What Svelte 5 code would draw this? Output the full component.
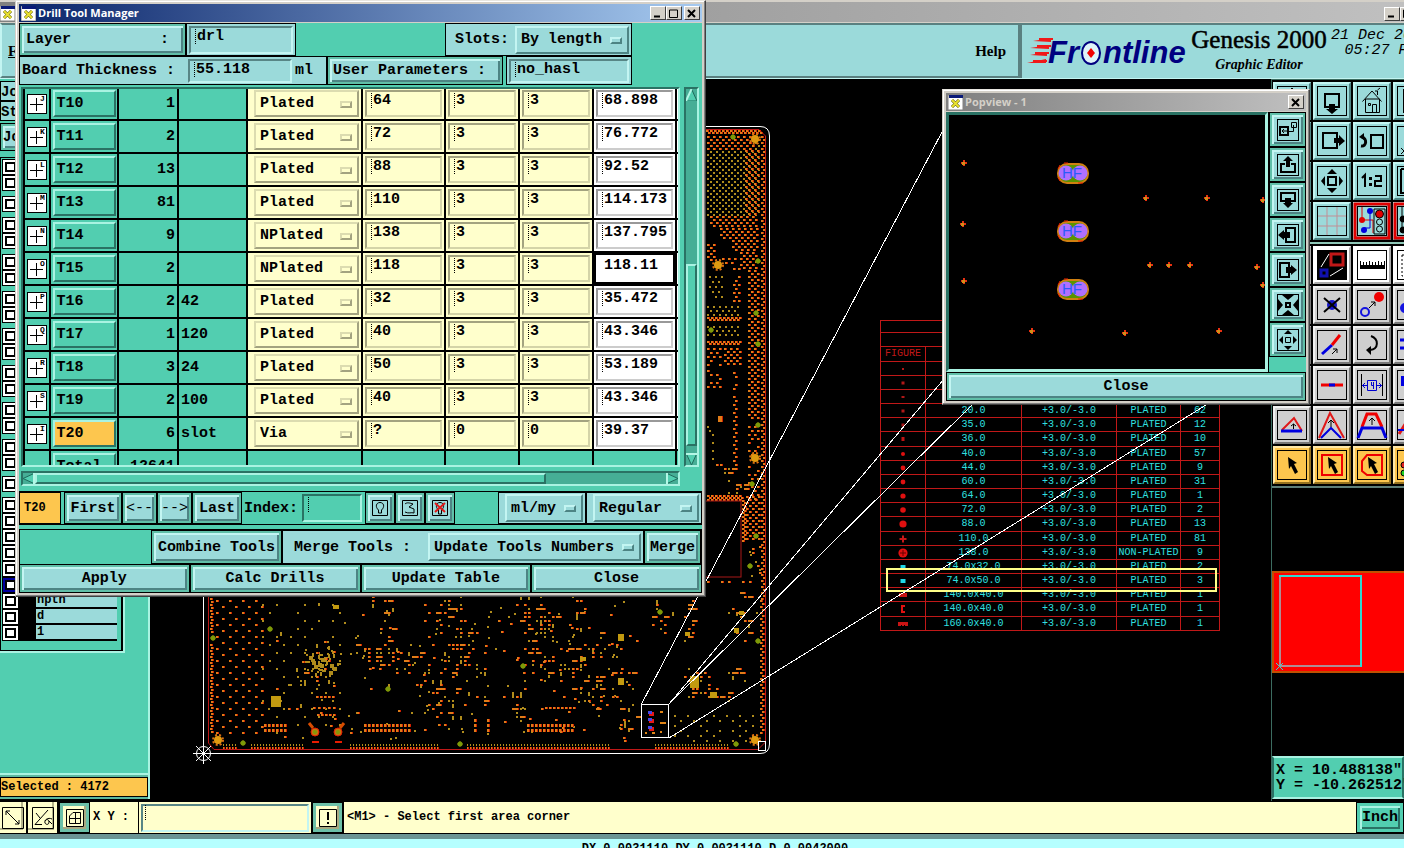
<script lang="ts">
	type Tool = { id: string; figure: string; count: string; slot: string; type: string; size: string; drill: string };

	const rows: [string, string, string, string, string, string, string][] = [
		['T10', 'J', '1', '', 'Plated', '64', '68.898'],
		['T11', 'K', '2', '', 'Plated', '72', '76.772'],
		['T12', 'L', '13', '', 'Plated', '88', '92.52'],
		['T13', 'M', '81', '', 'Plated', '110', '114.173'],
		['T14', 'N', '9', '', 'NPlated', '138', '137.795'],
		['T15', 'O', '2', '', 'NPlated', '118', '118.11'],
		['T16', 'P', '2', '42', 'Plated', '32', '35.472'],
		['T17', 'Q', '1', '120', 'Plated', '40', '43.346'],
		['T18', 'R', '3', '24', 'Plated', '50', '53.189'],
		['T19', 'S', '2', '100', 'Plated', '40', '43.346'],
		['T20', 'I', '6', 'slot', 'Via', '?', '39.37']
	];
	const tools: Tool[] = rows.map(([id, figure, count, slot, type, size, drill]) => ({ id, figure, count, slot, type, size, drill }));
	const selected = 'T20';

	const legend = [
		['', '', '', ''],
		['', '', '', ''],
		['', '', '', ''],
		['20.0', '+3.0/-3.0', 'PLATED', '62'],
		['35.0', '+3.0/-3.0', 'PLATED', '12'],
		['36.0', '+3.0/-3.0', 'PLATED', '10'],
		['40.0', '+3.0/-3.0', 'PLATED', '57'],
		['44.0', '+3.0/-3.0', 'PLATED', '9'],
		['60.0', '+3.0/-3.0', 'PLATED', '31'],
		['64.0', '+3.0/-3.0', 'PLATED', '1'],
		['72.0', '+3.0/-3.0', 'PLATED', '2'],
		['88.0', '+3.0/-3.0', 'PLATED', '13'],
		['110.0', '+3.0/-3.0', 'PLATED', '81'],
		['138.0', '+3.0/-3.0', 'NON-PLATED', '9'],
		['74.0x32.0', '+3.0/-3.0', 'PLATED', '2'],
		['74.0x50.0', '+3.0/-3.0', 'PLATED', '3'],
		['140.0x40.0', '+3.0/-3.0', 'PLATED', '1'],
		['140.0x40.0', '+3.0/-3.0', 'PLATED', '1'],
		['160.0x40.0', '+3.0/-3.0', 'PLATED', '1']
	];
	const dot = (r: number) => `<circle cx="7" cy="5" r="${r}" fill="#e01010"/>`;
	const box = (w: number, h: number, c: string) => `<rect x="${7 - w / 2}" y="${5 - h / 2}" width="${w}" height="${h}" fill="${c}"/>`;
	const figures = [
		box(2, 2, '#b01818'), box(3, 3, '#b01818'), box(3, 2, '#b01818'), box(3, 3, '#b01818'), box(3, 3, '#b01818'),
		box(3, 4, '#c01414'), dot(2), dot(2.4), dot(2.4), dot(2.6), dot(2.8), dot(3.6),
		'<path d="M7 1.500V8.500M3.500 5H10.500" stroke="#c81818" stroke-width="2"/>',
		'<circle cx="7" cy="5" r="4.600" fill="#e01010"/><path d="M7 2V8M4 5H10" stroke="#600"/>',
		box(5, 4, '#20d8e8'), box(5, 4, '#20d8e8'), box(8, 4, '#c81414'),
		'<path d="M5 1H9V3H7V7H9V9H5Z" fill="#e01010"/>',
		'<path d="M2 3H12V7H9V6H8V7H6V6H5V7H2Z" fill="#c81414"/>'
	];

	// number of layers in each block of the layer list
	const layerGroups = [2, 1, 2, 2, 2, 2, 2, 2, 2, 1, 9];
	const layerNames: Record<string, string> = { '10-6': 'npth', '10-7': 'd', '10-8': '1' };

	// toolbar icons, drawn on a 30x30 grid inside a thin frame
	const arrow = '<path d="M11 7L20 13L17 14L21 22L18 24L14 16L12 19Z" fill="#000" stroke="none"/>';
	const icons: Record<string, string> = {
		up: '<path d="M8 10H22V23H8Z" stroke-width="2"/><path d="M15 2L20 8H10Z" fill="#000"/>',
		down: '<path d="M8 8H22V21H8Z" stroke-width="2"/><path d="M12 18H18V23H21L15 28L9 23H12Z" fill="#000" stroke="none"/>',
		home: '<path d="M5.500 15.500L15 5L24.500 15.500M8.500 13V26.500H22.500V13H8.500M15.500 26V18.500H19.500V26M11.500 17.500H13.500V19.500H11.500ZM20.500 9V5H18M20.500 4L23 2"/>',
		split: '<path d="M7 3V27M7 14H28M7 20H28" stroke-width="2"/>',
		right: '<path d="M6 7H20V22H6Z" stroke-width="2"/><path d="M17 12H22V9L28 15L22 20V17H17Z" fill="#000" stroke="none"/>',
		back: '<path d="M14 9H26V22H14Z" stroke-width="2"/><path d="M4 20C10 21 10 12 5 11" stroke-width="3"/><path d="M2 11L7 7V14Z" fill="#000" stroke="none"/>',
		cross: '<path d="M4 22L10 28M10 22L4 28"/>',
		pan: '<path d="M11 11H19V19H11Z" stroke-width="2"/><path d="M15 3L20 8H10ZM15 27L20 22H10ZM4 15L8 10V20ZM26 15L22 10V20Z" fill="#000" stroke="none"/>',
		zoom: '<path d="M5 12L8 9V21" stroke-width="2"/><path d="M12 11H15V14H12ZM12 17H15V20H12Z" fill="#000" stroke="none"/><path d="M18 10H24V15H18V20H25" stroke-width="2"/>',
		frame: '<path d="M4 3H28M4 3V27H28M9 7H28M9 7V22H28" stroke-width="2"/>',
		grid: '<path d="M10 1V29M20 1V29M1 10H29M1 20H29" stroke="#c08f95"/>',
		net: '<rect x="-2" y="-2" width="34" height="34" stroke="#e00000" stroke-width="3"/><path d="M5 1V14H16V27" stroke="#e00000"/><path d="M13 4V22H7" stroke="#0000e0"/><circle cx="5" cy="14" r="3" fill="#e00000" stroke="none"/><circle cx="13" cy="5" r="3" fill="#0000e0" stroke="none"/><circle cx="7" cy="24" r="3" fill="#0000e0" stroke="none"/><path d="M17 3H28V28H17Z"/><circle cx="22.500" cy="8" r="4" fill="#e00000"/><circle cx="22.500" cy="16" r="3"/><circle cx="22.500" cy="23" r="3"/>',
		net2: '<rect x="-2" y="-2" width="34" height="34" stroke="#e00000" stroke-width="3"/><path d="M5 1V14M5 14V27"/><circle cx="6" cy="13" r="3" fill="#000"/><circle cx="6" cy="24" r="3" fill="#000"/>',
		area: '<rect x="1" y="1" width="28" height="28" fill="#000"/><path d="M14 4H26V15H14Z" stroke="#c01818" stroke-width="3"/><path d="M4 20H10V26H4Z" stroke="#1010b0" stroke-width="3"/><path d="M4 17L12 4M13 26L26 18" stroke="#fff"/>',
		ruler: '<path d="M3 15H28V19H3Z" fill="#000" stroke="none"/><path d="M3.500 15V11M6.500 15V12M9.500 15V12M12.500 15V11M15.500 15V12M18.500 15V12M21.500 15V11M24.500 15V12M27.500 15V11"/>',
		dashed: '<path d="M5 5H28M5 5V26H28" stroke-dasharray="2 2"/>',
		remove: '<circle cx="15" cy="15" r="5" fill="#1414c8" stroke="none"/><path d="M7 8L23 22M23 8L7 22" stroke-width="2"/>',
		move: '<circle cx="8" cy="22" r="4" stroke="#1414e0" stroke-width="2"/><circle cx="22" cy="7" r="5" fill="#f00000" stroke="none"/><path d="M12 18L18 12M14 12H18V16"/>',
		dot: '<circle cx="8" cy="18" r="5" fill="#1414e0" stroke="none"/>',
		line: '<path d="M5 24L15 15" stroke="#0000e0" stroke-width="3"/><path d="M15 15L23 5" stroke="#f00000" stroke-width="3"/><path d="M15 24L20 19M16 19H20V23"/>',
		turn: '<path d="M14 6C22 9 22 19 13 20" stroke-width="2"/><path d="M9 20L14 16V25Z" fill="#000" stroke="none"/>',
		dash: '<path d="M3 10H10M3 18H8" stroke="#0000e0" stroke-width="3"/>',
		trim: '<path d="M4 15H26" stroke="#f00000" stroke-width="3"/><path d="M12 15H18" stroke="#0000e0" stroke-width="3"/>',
		gap: '<path d="M4.500 4V26M25.500 4V26"/><path d="M10.500 10.500H19.500V20.500H10.500ZM5 15.500H10M20 15.500H25M8 13L5.500 15.500L8 18M22 13L24.500 15.500L22 18M14.500 12V15.500H17M16.500 12V19" stroke="#0000d0"/>',
		blue: '<path d="M4 6H14V16H4Z" fill="#0000e0" stroke="none"/>',
		tri: '<path d="M5 20L17 8L25 21" stroke="#e01818" stroke-width="2"/><path d="M4 21H25" stroke="#0000e0" stroke-width="3"/><path d="M16.500 19V14M14 16L16.500 14L19 16"/>',
		peak: '<path d="M2 28L13 3L27 28" stroke="#e01818" stroke-width="2"/><path d="M4 28L14 18L24 28" stroke="#0000e0" stroke-width="2"/><path d="M14 17V10M11 13L14 10L17 13"/>',
		trap: '<path d="M5 17L10 4H19L25 17" stroke="#f00000" stroke-width="3"/><path d="M1 28L5 18H25L29 28" stroke="#0000e0" stroke-width="3"/><path d="M15 15V9M12 11L15 8L18 11"/>',
		slope: '<path d="M2 24L12 8" stroke="#e01818" stroke-width="3"/><path d="M1 20H12" stroke="#0000e0" stroke-width="2"/>',
		pick: arrow,
		pickBox: '<path d="M5 5H25V25H5Z" stroke="#f00000" stroke-width="2"/>' + arrow,
		pickPoly: '<path d="M10 5H25V25H10L5 21V11Z" stroke="#f00000" stroke-width="2"/>' + arrow,
		pickNet: '<circle cx="7" cy="15" r="3" fill="#e02020"/><circle cx="7" cy="23" r="3" fill="#20d020"/>'
	};
	const toolbar: { tone: string; names: string[] }[] = [
		{ tone: 'cyan', names: ['up', 'down', 'home', 'split'] },
		{ tone: 'cyan', names: ['back', 'right', 'back', 'cross'] },
		{ tone: 'cyan', names: ['pan', 'pan', 'zoom', 'frame'] },
		{ tone: 'cyan', names: ['grid', 'grid', 'net', 'net2'] },
		{ tone: 'white', names: ['dashed', 'area', 'ruler', 'dashed'] },
		{ tone: 'grey', names: ['dot', 'remove', 'move', 'dot'] },
		{ tone: 'grey', names: ['line', 'line', 'turn', 'dash'] },
		{ tone: 'grey', names: ['trim', 'trim', 'gap', 'blue'] },
		{ tone: 'grey', names: ['tri', 'peak', 'trap', 'slope'] },
		{ tone: 'amber', names: ['pick', 'pickBox', 'pickPoly', 'pickNet'] }
	];

	// same idea on a 22x22 grid
	const popIcons: [string, string][] = [
		['Popup', '<path d="M3 8H11V16H3Z" stroke-width="2"/><path d="M14.500 3.500H19.500V8.500H14.500ZM11 12.500H16.500V6M7 10L5 12L7 14M5 12H10"/>'],
		['Pan up', '<path d="M8 10H4V18H18V10H14" stroke-width="2"/><path d="M9 13V7H6L11 2L16 7H13V13Z" fill="#000" stroke="none"/>'],
		['Pan down', '<path d="M8 12H4V4H18V12H14" stroke-width="2"/><path d="M8 9H14V14H16L11 19L6 14H8Z" fill="#000" stroke="none"/>'],
		['Pan left', '<path d="M9 8V4H18V18H9V14" stroke-width="2"/><path d="M13 8H7V6L1 11L7 16V14H13Z" fill="#000" stroke="none"/>'],
		['Pan right', '<path d="M12 8V4H3V18H12V14" stroke-width="2"/><path d="M9 8H14V6L20 11L14 16V14H9Z" fill="#000" stroke="none"/>'],
		['Zoom in', '<path d="M9 9H13V13H9Z" stroke-width="2"/><path d="M5 1H17L11 6ZM5 21H17L11 16ZM1 5V17L6 11ZM21 5V17L16 11Z" fill="#000" stroke="none"/>'],
		['Zoom out', '<path d="M8.500 8.500H13.500V13.500H8.500Z"/><path d="M11 1L15 5H7ZM11 21L15 17H7ZM2 11L6 7V15ZM20 11L16 7V15Z" fill="#000" stroke="none"/>']
	];
	const vias = [[964, 163], [963, 224], [964, 281], [1146, 198], [1207, 198], [1263, 200], [1150, 265], [1169, 265], [1190, 265], [1257, 267], [1263, 285], [1032, 331], [1125, 333], [1219, 331]];

	// board holes: orange ones carry a red edge, the rest are plain gold
	let seed = 71;
	const rnd = () => (seed = (seed * 16807) % 2147483647) / 2147483647;
	let gold = '';
	let red = '';
	let plain = '';
	function hole(x: number, y: number, w = 2, h = 2) {
		red += `M${x + 1} ${y}h${w}v${h}h-${w}z`;
		gold += `M${x} ${y}h${w}v${h}h-${w}z`;
	}
	function dim(x: number, y: number, w = 2, h = 2) {
		plain += `M${x} ${y}h${w}v${h}h-${w}z`;
	}
	function stagger(x0: number, y0: number, x1: number, y1: number, dx: number, dy: number, keep = 1, put: (x: number, y: number) => void = hole) {
		for (let y = y0, r = 0; y < y1; y += dy, r++) {
			for (let x = x0 + (r % 2 ? Math.floor(dx / 2) : 0); x < x1; x += dx) {
				if (rnd() < keep) put(x, y);
			}
		}
	}
	function scatter(x0: number, y0: number, x1: number, y1: number, n: number) {
		for (let i = 0; i < n; i++) {
			const x = Math.round(x0 + rnd() * (x1 - x0));
			const y = Math.round(y0 + rnd() * (y1 - y0));
			if (rnd() < 0.5) hole(x, y);
			else dim(x, y);
		}
	}
	function cluster(cx: number, cy: number, rx: number, ry: number, n: number) {
		for (let i = 0; i < n; i++) {
			const x = Math.round((cx + (rnd() + rnd() - 1) * rx) / 4) * 4;
			const y = Math.round((cy + (rnd() + rnd() - 1) * ry) / 4) * 4;
			const k = rnd();
			if (k < 0.12) hole(x, y, 5, 2);
			else if (k < 0.22) dim(x, y, 2, 4);
			else if (k < 0.55) dim(x, y);
			else hole(x, y);
		}
	}
	// upper right area
	stagger(706, 130, 762, 133, 4, 2);
	stagger(707, 136, 736, 216, 6, 3, 1, dim);
	stagger(737, 136, 760, 216, 6, 3, 1, dim);
	stagger(707, 136, 755, 150, 6, 3);
	stagger(745, 150, 760, 216, 6, 3);
	stagger(710, 216, 758, 228, 6, 3);
	stagger(720, 228, 758, 240, 6, 3);
	stagger(732, 240, 758, 252, 6, 3);
	stagger(740, 252, 758, 268, 6, 3);
	stagger(707, 244, 714, 262, 6, 3);
	stagger(722, 258, 736, 266, 6, 4);
	stagger(733, 268, 740, 304, 5, 4, 0.8);
	stagger(709, 276, 724, 298, 6, 5, 0.8, dim);
	stagger(707, 306, 740, 316, 6, 4, 1, dim);
	stagger(707, 317, 740, 320, 4, 2);
	stagger(707, 326, 740, 338, 6, 4, 1, dim);
	stagger(707, 341, 740, 344, 4, 2);
	stagger(707, 348, 722, 368, 6, 4, 0.8);
	stagger(724, 348, 740, 366, 6, 3);
	stagger(707, 370, 722, 390, 6, 4, 0.7);
	stagger(733, 372, 737, 470, 4, 4, 0.8);
	stagger(748, 270, 760, 420, 6, 3);
	stagger(748, 426, 760, 500, 6, 4, 0.7);
	stagger(746, 496, 760, 540, 6, 3);
	stagger(707, 495, 742, 500, 4, 2);
	stagger(742, 500, 746, 542, 4, 2);
	stagger(761, 136, 765, 600, 4, 3);
	stagger(707, 426, 714, 470, 5, 4, 0.5, dim);
	cluster(726, 470, 16, 12, 12);
	cluster(738, 488, 10, 8, 8);
	scatter(748, 545, 760, 578, 10);
	stagger(707, 581, 756, 583, 7, 2, 0.8);
	hole(718, 416, 4, 6);

	// edges
	stagger(210, 598, 213, 632, 3, 3);
	stagger(210, 644, 213, 734, 3, 3);
	stagger(760, 600, 764, 735, 4, 3);
	for (const [a, b] of [[223, 237], [251, 304], [350, 438], [467, 610], [655, 730]]) {
		for (let x = a; x < b; x += 3) {
			dim(x, 744, 1, 2);
			hole(x, 747, 1, 2);
		}
	}
	// lower left field
	stagger(216, 600, 262, 738, 13, 6);
	stagger(262, 604, 345, 740, 14, 8, 0.65, dim);
	cluster(285, 680, 30, 60, 14);
	// components
	for (let i = 0; i < 46; i++) dim(Math.round(320 + (rnd() + rnd() - 1) * 20), Math.round(660 + (rnd() + rnd() - 1) * 20), i % 3 ? 2 : 4, i % 2 ? 2 : 4);
	cluster(316, 675, 20, 24, 14);
	cluster(370, 650, 28, 18, 20);
	cluster(398, 663, 38, 22, 28);
	cluster(385, 618, 20, 30, 18);
	cluster(446, 615, 26, 32, 34);
	cluster(460, 652, 30, 26, 38);
	cluster(452, 690, 46, 26, 34);
	cluster(536, 626, 24, 34, 46);
	cluster(552, 662, 40, 24, 42);
	cluster(520, 705, 12, 26, 20);
	cluster(590, 686, 20, 26, 34);
	cluster(596, 646, 34, 18, 24);
	cluster(622, 672, 14, 40, 14);
	cluster(576, 610, 8, 26, 14);
	cluster(660, 620, 12, 24, 14);
	cluster(688, 618, 10, 26, 16);
	cluster(740, 618, 16, 28, 18);
	cluster(735, 672, 8, 8, 12);
	cluster(696, 684, 14, 18, 30);
	cluster(716, 696, 16, 8, 12);
	cluster(628, 725, 12, 24, 14);
	cluster(440, 712, 36, 22, 16);
	scatter(300, 600, 636, 740, 150);
	stagger(674, 715, 755, 742, 13, 5, 0.8, dim);
	// connectors
	for (const [x0, n] of [[264, 6], [364, 12], [527, 12]]) {
		for (let i = 0; i < n; i++) {
			hole(x0 + i * 4, 724, 2, 3);
			hole(x0 + i * 4, 729, 2, 3);
		}
	}
	for (let i = 0; i < 5; i++) {
		hole(316 + i * 4, 696);
		hole(313 + i * 5, 707);
		hole(317 + i * 4, 714);
	}
	for (let i = 0; i < 8; i++) hole(545 + i * 4, 707);
	for (let i = 0; i < 3; i++) {
		hole(474, 719 + i * 5, 2, 3);
		hole(487, 719 + i * 5, 2, 3);
	}
	const blocks = [[271, 696, 10, 11], [690, 676, 9, 12], [710, 692, 7, 6], [618, 634, 6, 7], [618, 678, 6, 7], [580, 657, 6, 4], [685, 632, 5, 4], [734, 628, 5, 5], [739, 611, 5, 4], [333, 605, 6, 4]];
	const stars = [[218, 740], [755, 740], [755, 139], [718, 265], [755, 458]];
	const greens = [[213, 638], [270, 629], [243, 743], [388, 689], [523, 666], [460, 744], [660, 612], [758, 641], [736, 744], [733, 137], [758, 261], [756, 313], [711, 330], [758, 344], [758, 425], [752, 484], [756, 536], [750, 566]];
</script>

{#snippet winIcon()}
	<svg class="win-icon" width="15" height="15" viewBox="0 0 15 15" aria-hidden="true">
		<rect width="15" height="15" fill="#fff" stroke="#808080" />
		<rect x="1" y="0" width="14" height="3" fill="#0a1a78" />
		<path d="M4 5L11 12M11 5L4 12" stroke="#555500" stroke-width="3" />
		<path d="M4 5L11 12M11 5L4 12" stroke="#e8e030" stroke-width="2" />
	</svg>
{/snippet}

{#snippet option(value: string, label: string)}
	<span class="option">
		<select aria-label={label}><option>{value}</option></select>
		<i></i>
	</span>
{/snippet}

{#snippet field(value: string, label: string, caret = true)}
	<span class="field" class:caret>
		<input type="text" {value} aria-label={label} />
	</span>
{/snippet}

<div class="app">
	<header class="titlebar idle">
		{@render winIcon()}
		<span class="grow"></span>
		<button class="win-btn" aria-label="Minimize"><svg width="10" height="9"><path d="M1 7.500H7" stroke="#000" stroke-width="2" /></svg></button>
		<button class="win-btn" aria-label="Maximize"><svg width="10" height="9"><path d="M.5 1H8.500V8.500H.5Z" fill="none" stroke="#000" /></svg></button>
	</header>

	<div class="menubar">
		<nav class="menus">
			<a href="#file" class="file"><u>F</u></a>
			<a href="#help">Help</a>
		</nav>
		<div class="brand">
			<svg class="logo" width="164" height="40" viewBox="0 0 164 40" role="img" aria-label="Frontline">
				<path d="M6 14L24 11V15ZM3 21L22 18V22ZM3 28L20 25V29ZM0 36L19 32V36Z" fill="#f01818" />
				<path d="M12 12H26M10 19H24M8 26H22M6 34H20" stroke="#f01818" stroke-width="2" />
				<g class="wordmark">
					<text x="21" y="36">Fr</text>
					<text x="76" y="36">ntline</text>
				</g>
				<ellipse cx="64" cy="26" rx="9" ry="11" fill="#dff4f8" stroke="#000080" stroke-width="2" />
				<path d="M64 21L68 26L64 31L60 26Z" fill="#f00000" />
			</svg>
			<div class="product">
				<strong>Genesis 2000</strong>
				<em>Graphic Editor</em>
			</div>
			<div class="clock"><span>21 Dec 2007</span><span>05:27 PM</span></div>
		</div>
	</div>

	<main class="workspace">
		<aside class="layers">
			<div class="info">Jo</div>
			<div class="info">St</div>
			<button class="btn job">Jo</button>
			<div class="layer-list">
				{#each layerGroups as count, g}
					<ul>
						{#each Array(count) as _, i}
							<li>
								<input type="checkbox" aria-label="Layer {g + 1}.{i + 1}" class:current={g === 10 && i === 5} />
								<span>{layerNames[`${g}-${i}`] ?? ''}</span>
							</li>
						{/each}
					</ul>
				{/each}
			</div>
			<div class="selected"><span>Selected : 4172</span></div>
		</aside>

		<section class="canvas">
			<svg class="board" width="1122" height="720" viewBox="150 80 1122 720" fill="none" aria-hidden="true">
				<path d="M203.500 126V753.500H760Q769.500 753.500 769.500 744V136Q769.500 126.500 760 126.500H203.500" stroke="#fff" stroke-width="1" />
				<path d="M208.500 130V743L214 749.500H758L765.500 742V136L759 129.500H208" stroke="#c01818" />
				<path d={plain} fill="#b08c1c" shape-rendering="crispEdges" />
				<path d={red} fill="#d02000" shape-rendering="crispEdges" />
				<path d={gold} fill="#e07c18" shape-rendering="crispEdges" />
				<rect x="690" y="501" width="51" height="76" fill="#000" stroke="#a81818" />
				{#each blocks as [x, y, w, h]}
					<rect {x} {y} width={w} height={h} fill="#c29a10" />
				{/each}
				{#each stars as [x, y]}
					<circle cx={x} cy={y} r="5" stroke="#e07010" stroke-width="2" stroke-dasharray="2 2" />
					<circle cx={x} cy={y} r="4" fill="#e09a10" />
				{/each}
				{#each greens as [x, y]}
					<path d="M{x - 3} {y}h6M{x} {y - 3}v6" stroke="#907800" />
					<circle cx={x} cy={y} r="2.500" fill="#7c9a08" />
				{/each}
				{#each [315, 338] as x}
					<circle cx={x} cy="732" r="4" fill="#c07810" stroke="#e81c00" stroke-width="1" />
					<circle cx={x} cy="732" r="2" fill="#809a08" />
					<path d="M{x - 3} 742h7" stroke="#e81c00" stroke-width="2" />
				{/each}
				<path d="M309 723l4 5M344 723l-4 5" stroke="#d84c00" stroke-width="3" />
				<g shape-rendering="crispEdges">
					<rect x="641.500" y="704.500" width="27" height="33" fill="#000" stroke="#fff" />
					{#each [712, 719, 727] as y}
						<rect x="649" {y} width="5" height="4" fill="#e81818" />
						<rect x="648" y={y - 1} width="4" height="3" fill="#4848e8" />
					{/each}
					<path d="M660 712h3M660 723h6M660 732h2M645 733h2M652 733h3" stroke="#e08416" stroke-width="2" />
					<path d="M758.500 741.500h7v9h-7z" stroke="#fff" />
				</g>
				<g stroke="#fff">
					<circle cx="203.500" cy="753.500" r="7" />
					<path d="M193 753.500H214M203.500 743V764M196 746L211 761M211 746L196 761" />
				</g>
			</svg>

			<table class="legend">
				<colgroup><col class="c0" /><col class="c1" /><col class="c2" /><col class="c3" /><col class="c4" /></colgroup>
				<thead>
					<tr class="cap"><td colspan="5"></td></tr>
					<tr class="cap2"><td colspan="5"></td></tr>
					<tr><th>FIGURE</th><th></th><th></th><th></th><th></th></tr>
				</thead>
				<tbody>
					{#each legend as cells, i}
						<tr>
							<td><svg width="14" height="10" viewBox="0 0 14 10">{@html figures[i]}</svg></td>
							{#each cells as cell}<td>{cell}</td>{/each}
						</tr>
					{/each}
				</tbody>
			</table>
			<div class="highlight"></div>
			<svg class="board" width="1122" height="720" viewBox="150 80 1122 720" fill="none" aria-hidden="true">
				<path d="M641.500 704L942 132M669 704L944 379M669 704L972 405M669 738L1206 405" stroke="#fff" shape-rendering="crispEdges" />
			</svg>
		</section>

		<aside class="side">
			<div class="toolbar">
				{#each toolbar as { tone, names }, r}
					<div class="tool-row" class:break={r === 4}>
						{#each names as name}
							<button class="tool {tone}" aria-label={name}>
								<svg width="30" height="30" viewBox="0 0 30 30" fill="none" stroke="#000">
									<rect x=".5" y=".5" width="29" height="29" />
									{@html icons[name]}
								</svg>
							</button>
						{/each}
					</div>
				{/each}
			</div>
			<div class="overview">
				<svg width="160" height="102" viewBox="0 0 160 102" fill="none" aria-hidden="true">
					<rect x="1" y="1" width="170" height="100" fill="#f00" stroke="#c05000" stroke-width="2" />
					<path d="M8 5V95H88" stroke="#b08c94" stroke-width="2" />
					<path d="M7 5H89V96" stroke="#30d8d0" stroke-width="2" />
					<path d="M4 92L11 99M11 92L4 99" stroke="#30d8d0" />
				</svg>
			</div>
			<div class="coords"><span>X = 10.488138"</span><span>Y = -10.262512"</span></div>
		</aside>
	</main>

	<footer class="status">
		<button class="mini" aria-label="Snap">
			<svg width="22" height="22" viewBox="0 0 22 22" fill="none" stroke="#000"><path d="M.5 .5H21.500V21.500H.5ZM4 4L17 17M4 8V4H8M17 13V17H13" /></svg>
		</button>
		<button class="mini" aria-label="Angle">
			<svg width="22" height="22" viewBox="0 0 22 22" fill="none" stroke="#000"><path d="M.5 .5H21.500V21.500H.5ZM3 17.500L16 3M3 17.500H10M4 6L8 11M20 12C16 10 12 13 13 16C14 18 17 18 17 15C17 12 14 12 13 14M17 14L20 17" /></svg>
		</button>
		<button class="mini framed" aria-label="Grid">
			<svg width="18" height="18" viewBox="0 0 18 18" fill="none" stroke="#000"><path d="M.5 .5H17.500V17.500H.5ZM7 3.500H14.500V14.500H3.500V7L7 3.500M9.500 4V15M3 9.500H15" /></svg>
		</button>
		<label class="xy" for="xy">X Y :</label>
		<span class="field caret xy-field"><input id="xy" type="text" /></span>
		<button class="mini framed" aria-label="Message">
			<svg width="18" height="18" viewBox="0 0 18 18" fill="none" stroke="#000"><path d="M.5 .5H17.500V17.500H.5Z" /><path d="M9 3V11M9 13V15" stroke-width="2" /></svg>
		</button>
		<p class="message">&lt;M1&gt; - Select first area corner</p>
		<button class="btn green units">Inch</button>
	</footer>
	<div class="readout"><span>DX 0.0031110 DY 0.0031110 D 0.0042000</span></div>
</div>

<section class="window manager">
	<header class="titlebar active">
		{@render winIcon()}
		<h1>Drill Tool Manager</h1>
		<button class="win-btn" aria-label="Minimize"><svg width="10" height="9"><path d="M1 7.500H7" stroke="#000" stroke-width="2" /></svg></button>
		<button class="win-btn" aria-label="Maximize"><svg width="10" height="9"><path d="M.5 1H8.500V8.500H.5Z" fill="none" stroke="#000" stroke-width="1" /></svg></button>
		<button class="win-btn close" aria-label="Close window"><svg width="10" height="9"><path d="M1 1L8 8M8 1L1 8" stroke="#000" stroke-width="2" /></svg></button>
	</header>
	<div class="body">
		<div class="form-row first">
			<button class="btn layer"><span>Layer</span><span>:</span></button>
			<div class="cell pad">{@render field('drl', 'Layer')}</div>
			<span class="grow"></span>
			<div class="cell slots"><span>Slots:</span>{@render option('By length', 'Slots')}</div>
		</div>
		<div class="form-row second">
			<div class="cell thick"><span>Board Thickness :</span>{@render field('55.118', 'Board Thickness')}<span>ml</span></div>
			<button class="btn params">User Parameters :</button>
			<div class="cell user">{@render field('no_hasl', 'User Parameters')}</div>
		</div>

		<div class="scroller">
			<div class="viewport">
				<table class="tools">
					<colgroup>
						<col class="w0" /><col class="w1" /><col class="w2" /><col class="w3" /><col class="w4" />
						<col class="w5" /><col class="w6" /><col class="w6" /><col class="w5" /><col class="w7" />
					</colgroup>
					<tbody>
						{#each tools as tool}
							<tr>
								<td class="fig">
									<svg width="20" height="20" viewBox="0 0 20 20">
										<rect x=".5" y=".5" width="19" height="19" fill="#fff" stroke="#000" />
										<path d="M3 10.500H16M9.500 4V17" stroke="#000" />
										<text x="13" y="7">{tool.figure}</text>
									</svg>
								</td>
								<td class="name"><button class:on={tool.id === selected}>{tool.id}</button></td>
								<td class="num">{tool.count}</td>
								<td class="slot">{tool.slot}</td>
								<td class="edit type">{@render option(tool.type, `${tool.id} type`)}</td>
								<td class="edit">{@render field(tool.size, `${tool.id} finish size`)}</td>
								<td class="edit">{@render field(tool.id === selected ? '0' : '3', `${tool.id} plus tolerance`)}</td>
								<td class="edit">{@render field(tool.id === selected ? '0' : '3', `${tool.id} minus tolerance`)}</td>
								<td class="edit white" class:focus={tool.id === 'T15'}>{@render field(tool.drill, `${tool.id} drill size`, tool.id !== 'T15')}</td>
								<td class="edit white"><span class="field"></span></td>
							</tr>
						{/each}
						<tr>
							<td></td>
							<td class="name"><button>Total</button></td>
							<td class="num">12641</td>
							<td></td><td></td><td></td><td></td><td></td><td></td><td></td>
						</tr>
					</tbody>
				</table>
			</div>
			<div class="bar vertical">
				<svg width="11" height="12" viewBox="0 0 11 12"><path d="M5.500 0L11 12H0Z" fill="#52ceb0" stroke="#1f6b5c" /><path d="M5.500 0L0 12" stroke="#b4f7e6" stroke-width="2" /></svg>
				<div class="thumb"></div>
				<svg width="11" height="12" viewBox="0 0 11 12"><path d="M0 0H11L5.500 12Z" fill="#52ceb0" stroke="#1f6b5c" /><path d="M0 1H11" stroke="#b4f7e6" stroke-width="2" /></svg>
			</div>
			<div class="bar horizontal">
				<svg width="12" height="11" viewBox="0 0 12 11"><path d="M12 0V11L0 5.500Z" fill="#52ceb0" stroke="#1f6b5c" /><path d="M11 0V11" stroke="#b4f7e6" stroke-width="2" /></svg>
				<div class="thumb"></div>
				<span class="grow"></span>
				<svg width="12" height="11" viewBox="0 0 12 11"><path d="M0 0V11L12 5.500Z" fill="#52ceb0" stroke="#1f6b5c" /><path d="M1 0V11" stroke="#b4f7e6" stroke-width="2" /></svg>
			</div>
		</div>

		<div class="form-row nav">
			<span class="badge">T20</span>
			<button class="btn wide">First</button>
			<button class="btn step">&lt;--</button>
			<button class="btn step">--&gt;</button>
			<button class="btn last">Last</button>
			<label class="index">Index:<span class="field caret"><input type="text" /></span></label>
			<button class="btn sq" aria-label="Highlight">
				<svg width="16" height="16" viewBox="0 0 16 16" fill="none" stroke="#000"><path d="M.5 .5H15.500V15.500H.5Z" /><path d="M6.500 10C3 7 4 2.500 8 2.500S13 7 9.500 10V13H6.500Z" /></svg>
			</button>
			<button class="btn sq" aria-label="Select">
				<svg width="16" height="16" viewBox="0 0 16 16" fill="none" stroke="#000"><path d="M.5 .5H15.500V15.500H.5Z" /><path d="M3 4C5 2 8 3 11 4L7 7L12 9V13C9 12 7 14 3 12" /></svg>
			</button>
			<button class="btn sq" aria-label="Clear">
				<svg width="16" height="16" viewBox="0 0 16 16" fill="none" stroke="#000"><path d="M.5 .5H15.500V15.500H.5Z" /><path d="M6.500 10C3 7 4 2.500 8 2.500S13 7 9.500 10V14H6.500Z" /><path d="M3 3L13 12M13 3L3 12" stroke="#e01818" stroke-width="2" /></svg>
			</button>
			<span class="grow"></span>
			<div class="cell unit">{@render option('ml/my', 'Units')}</div>
			<div class="cell mode">{@render option('Regular', 'Mode')}</div>
		</div>

		<div class="form-row merge">
			<span class="grow"></span>
			<button class="btn combine">Combine Tools</button>
			<div class="cell merging"><span>Merge Tools :</span>{@render option('Update Tools Numbers', 'Merge Tools')}</div>
			<button class="btn do-merge">Merge</button>
		</div>

		<div class="form-row actions">
			{#each ['Apply', 'Calc Drills', 'Update Table', 'Close'] as action}
				<button class="btn">{action}</button>
			{/each}
		</div>
	</div>
</section>

<section class="window popview">
	<header class="titlebar idle">
		{@render winIcon()}
		<h1>Popview - 1</h1>
		<button class="win-btn" aria-label="Close popview"><svg width="10" height="9"><path d="M1 1L8 8M8 1L1 8" stroke="#000" stroke-width="2" /></svg></button>
	</header>
	<div class="pop-body">
		<svg class="pop-canvas" width="316" height="254" viewBox="949 115 316 254" fill="none">
			{#each vias as [x, y]}
				<path d="M{x - 3} {y}h6M{x} {y - 3}v6" stroke="#e83010" stroke-width="2" />
				<rect x={x - 2} y={y - 1} width="3" height="3" fill="#d09018" />
			{/each}
			{#each [173, 231, 289] as y}
				<rect x="1058" y={y - 9} width="30" height="19" rx="9" fill="#5a9400" stroke="#d08010" stroke-width="2" />
				<circle cx="1066" cy={y} r="7.500" fill="#b070ff" />
				<circle cx="1080" cy={y} r="7.500" fill="#b070ff" />
				<path d="M1060 {y - 8}L1058 {y - 4}M1060 {y + 8}L1058 {y + 4}M1064 {y - 10}H1068M1078 {y + 10}H1083" stroke="#f02000" />
				<text x="1062" y={y + 5}>HF</text>
			{/each}
		</svg>
		<div class="pop-tools">
			{#each popIcons as [label, icon]}
				<button class="btn" aria-label={label}>
					<svg width="22" height="22" viewBox="0 0 22 22" fill="none" stroke="#000">
						<rect x=".5" y=".5" width="21" height="21" />
						{@html icon}
					</svg>
				</button>
			{/each}
		</div>
	</div>
	<button class="btn pop-close">Close</button>
</section>

<style>
	:global(body) {
		background: #000;
		overflow: hidden;
	}

	.app,
	.window {
		--teal: #52ceb0;
		--cyan: #9bdada;
		--cream: #ffffcc;
		--amber: #fdc64e;
		--dark: #2a7264;
		--light: #a9f3e2;
		font: bold 15px/17px 'Liberation Mono', monospace;
		color: #000;
		box-sizing: border-box;
	}

	.app *,
	.window * {
		box-sizing: border-box;
	}

	button,
	input,
	select {
		font: inherit;
		color: inherit;
		margin: 0;
		border-radius: 0;
	}

	button {
		padding: 0;
	}

	.grow {
		flex: 1;
	}

	.app {
		display: flex;
		flex-direction: column;
		height: 100vh;
		overflow: hidden;
		background: #000;
	}

	/* window title bars */
	.titlebar {
		display: flex;
		align-items: center;
		flex: none;
		height: 18px;
		padding: 0 2px;
		background: linear-gradient(90deg, #808080, #c0c0c0);
	}

	.app > .titlebar {
		height: 23px;
		padding: 3px 0 0;
		border-top: 2px solid #d4d0c8;
		border-bottom: 1px solid #d4d0c8;
	}

	.app > .titlebar .win-btn:last-child {
		margin-right: -12px;
	}

	.titlebar.active {
		background: linear-gradient(90deg, #0a246a, #a6caf0);
	}

	.titlebar h1 {
		flex: 1;
		margin: 0 0 0 2px;
		font: bold 11px/16px 'Open Sans', 'Noto Sans', sans-serif;
		color: #d4d0c8;
	}

	.titlebar.active h1 {
		color: #fff;
	}

	.win-icon {
		flex: none;
	}

	.win-btn {
		display: grid;
		place-items: center;
		width: 16px;
		height: 14px;
		background: #d4d0c8;
		border: 1px solid;
		border-color: #fff #404040 #404040 #fff;
	}

	.win-btn.close {
		margin-left: 2px;
	}

	/* header */
	.menubar {
		display: flex;
		flex: none;
		height: 56px;
		background: var(--cyan);
		border-bottom: 1px solid #c3f5f2;
	}

	.menus {
		display: flex;
		flex: 1;
		align-items: center;
		justify-content: space-between;
		padding: 0 12px 0 6px;
		border: 2px solid;
		border-color: #5a8080 #5a8080 #5a8080 #c3f5f2;
		font: bold 15px/16px 'Liberation Serif', serif;
	}

	.menus a {
		color: #000;
		text-decoration: none;
	}

	.brand {
		display: flex;
		flex: none;
		width: 384px;
		padding: 2px 0 0 5px;
		border-left: 2px solid #5a8080;
		border-top: 2px solid #5a8080;
	}

	.logo {
		flex: none;
		overflow: visible;
	}

	.wordmark {
		font: italic bold 31px 'Liberation Sans', sans-serif;
		fill: #000080;
	}

	.product {
		display: flex;
		flex-direction: column;
		align-items: center;
		flex: none;
		width: 136px;
		font-family: 'Liberation Serif', serif;
		white-space: nowrap;
	}

	.product strong {
		font-size: 25px;
		line-height: 26px;
		font-weight: normal;
		-webkit-text-stroke: 1px #000;
		-webkit-text-stroke-width: thin;
	}

	.product em {
		font-size: 14px;
		line-height: 24px;
	}

	.clock {
		flex: none;
		padding: 1px 0 0 4px;
		font-style: italic;
		font-weight: normal;
		line-height: 15px;
		text-align: center;
	}

	.clock span {
		display: block;
	}

	/* workspace */
	.workspace {
		display: flex;
		flex: 1;
		min-height: 0;
	}

	.layers {
		display: flex;
		flex-direction: column;
		align-items: flex-start;
		width: 150px;
		flex: none;
		margin-bottom: 2px;
		padding-top: 2px;
		background: var(--teal);
		border-right: 2px solid var(--light);
	}

	.info {
		width: 100%;
		height: 20px;
		background: var(--cyan);
		border: 1px solid #000;
		font-size: 14px;
		line-height: 20px;
	}

	.layers .job {
		height: 28px;
		margin: 2px 0 6px;
		padding-left: 2px;
		width: 100%;
		text-align: left;
		font-size: 14px;
	}

	.layer-list {
		width: 123px;
		padding: 1px 0 9px 1px;
		border: 1px solid #000;
		border-right-width: 2px;
		background: var(--teal);
		box-shadow: 1px 1px 0 1px var(--light);
	}

	.layer-list ul {
		margin: 0 4px 5px 0;
		padding: 0;
		list-style: none;
		background: #000;
	}

	.layer-list ul:last-child {
		margin-bottom: 0;
	}

	.layer-list li {
		display: flex;
		justify-content: space-between;
		height: 16px;
	}

	.layer-list input {
		appearance: none;
		width: 15px;
		height: 14px;
		margin: 1px 1px;
		background: #fff;
		border: 2px solid #fff;
		outline: 1px solid #000;
		box-shadow: inset 0 0 0 2px #000;
	}

	.layer-list input.current {
		border-color: #0000a0;
	}

	.layer-list span {
		width: 81px;
		height: 14px;
		padding-left: 1px;
		background: var(--cyan);
		font-size: 12px;
		line-height: 14px;
	}

	.selected {
		width: 100%;
		margin-top: auto;
		padding: 2px 0;
		border-top: 2px solid var(--light);
		background: #5cb8a0;
	}

	.selected span {
		display: block;
		height: 20px;
		border: 1px solid #000;
		background: var(--amber);
		font-size: 12px;
		line-height: 18px;
	}

	.canvas {
		position: relative;
		flex: 1;
		min-width: 0;
		overflow: hidden;
		background: #000;
	}

	.board {
		position: absolute;
		left: 0;
		top: 1px;
	}

	.legend {
		position: absolute;
		left: 730px;
		top: 241px;
		width: 340px;
		table-layout: fixed;
		border-collapse: collapse;
		font: 10px/12px 'Liberation Mono', monospace;
		color: #30e0e0;
		text-align: center;
	}

	.legend .c0 { width: 45px; }
	.legend .c1 { width: 96px; }
	.legend .c2 { width: 95px; }
	.legend .c3 { width: 64px; }
	.legend .c4 { width: 39px; }

	.legend td,
	.legend th {
		height: 14px;
		padding: 0;
		border: 1px solid #c01818;
		white-space: nowrap;
	}

	.legend tbody tr:nth-child(6n) td,
	.legend th {
		height: 15px;
	}

	.legend .cap td {
		height: 12px;
	}

	.legend th {
		color: #c01818;
		font-weight: normal;
	}

	.legend svg {
		display: block;
		margin: 0 auto;
	}

	.highlight {
		position: absolute;
		left: 736px;
		top: 489px;
		width: 331px;
		height: 24px;
		border: 2px solid #ffff88;
	}

	.side {
		display: flex;
		flex-direction: column;
		width: 133px;
		flex: none;
		overflow: hidden;
		background: #000;
		border-left: 1px solid #3c6c60;
	}

	.toolbar {
		padding: 2px 0 0 1px;
		border-top: 1px solid #3c6c60;
		border-bottom: 2px solid #5f7f78;
	}

	.tool-row {
		display: flex;
		gap: 2px;
		padding-bottom: 2px;
	}

	.tool-row.break {
		border-top: 2px solid #8fc8b8;
		padding-top: 2px;
	}

	.tool {
		display: grid;
		place-items: center;
		flex: none;
		width: 38px;
		height: 38px;
		border: 2px solid;
	}

	.tool svg {
		overflow: visible;
	}

	.tool.cyan {
		background: var(--cyan);
		border-color: #c3f5f2 #4d8484 #4d8484 #c3f5f2;
	}

	.tool.grey {
		background: #cfcfcf;
		border-color: #f0f0f0 #777 #777 #f0f0f0;
	}

	.tool.white {
		background: #fff;
		border-color: #fff #aaa #aaa #fff;
	}

	.tool.amber {
		background: var(--amber);
		border-color: #ffe8a8 #94711f #94711f #ffe8a8;
	}

	.overview {
		display: flex;
		align-items: center;
		flex: 1;
	}

	.overview svg {
		flex: none;
	}

	.coords {
		padding: 5px 0 4px 2px;
		border: 2px solid;
		border-color: var(--light) var(--dark) var(--light) var(--dark);
		background: var(--teal);
		margin-bottom: 2px;
		line-height: 15px;
		white-space: nowrap;
	}

	.coords span {
		display: block;
	}

	/* status line */
	.status {
		display: flex;
		flex: none;
		height: 33px;
		background: var(--cream);
		border-top: 1px solid #000;
		border-bottom: 1px solid #000;
		font-size: 12px;
	}

	.mini {
		display: grid;
		place-items: center;
		flex: none;
		width: 31px;
		background: var(--cream);
		border: 0;
		border-right: 2px solid #000;
		box-shadow: inset -3px -3px 0 #ffffcc, inset -5px -5px 0 #b5b58c;
	}

	.mini:first-child {
		width: 28px;
	}

	.mini.framed {
		border: 1px solid #000;
		box-shadow: inset 0 0 0 3px #6cc0a8, inset -5px -5px 0 #a9a982;
	}

	.xy {
		width: 48px;
		padding-left: 3px;
		line-height: 31px;
		white-space: nowrap;
	}

	.status .xy-field {
		width: 174px;
		padding: 2px;
		border-left: 1px solid #000;
		border-right: 1px solid #000;
	}

	.xy-field input {
		border-color: #a3a380 #d4d4a8 #d4d4a8 #a3a380;
	}

	.message {
		flex: 1;
		margin: 0;
		padding-left: 3px;
		border-left: 1px solid #000;
		line-height: 31px;
	}

	.btn.units {
		width: 48px;
		font-size: 15px;
		overflow: hidden;
	}

	.readout {
		flex: none;
		height: 14px;
		border-top: 5px solid #6a9494;
		background: #b5ffff;
		font-size: 12px;
		line-height: 17px;
		text-align: center;
		overflow: hidden;
	}

	.readout span {
		display: block;
		padding: 2px 0 0 26px;
	}

	/* floating windows */
	.window {
		position: absolute;
		background: #d4d0c8;
		border: 1px solid;
		border-color: #e8e6e0 #404040 #404040 #d4d0c8;
		box-shadow: inset -1px -1px 0 #808080, inset 1px 1px 0 #fff;
		padding: 3px;
	}

	.manager {
		left: 15px;
		top: 0;
		width: 691px;
	}

	.popview {
		left: 942px;
		top: 89px;
		width: 368px;
	}

	.body {
		margin-top: 1px;
		background: var(--teal);
	}

	.btn {
		background: var(--cyan);
		border: 1px solid #000;
		box-shadow: inset 0 0 0 2px #60bfa8, inset 4px 4px 0 #c3f5f2, inset -4px -4px 0 #4d8484;
		text-align: center;
		white-space: nowrap;
	}

	.btn.green {
		background: var(--teal);
		box-shadow: inset 0 0 0 3px #52ceb0, inset 5px 5px 0 #a9f3e2, inset -5px -5px 0 #2a7264;
	}

	.form-row {
		display: flex;
		align-items: stretch;
	}

	.cell {
		display: flex;
		align-items: center;
		border: 1px solid #000;
		background: var(--cyan);
		white-space: nowrap;
	}

	.field {
		position: relative;
		display: block;
	}

	.field input {
		display: block;
		width: 100%;
		height: 28px;
		padding: 0 0 6px 6px;
		background: transparent;
		border: 2px solid #588686;
		border-color: #588686 #c3f5f2 #c3f5f2 #588686;
		outline: 0;
	}

	.field.caret::before {
		content: '';
		position: absolute;
		left: 6px;
		top: 3px;
		height: 15px;
		border-left: 1px dotted #000;
	}

	.option {
		position: relative;
		display: block;
	}

	.option select {
		display: block;
		appearance: none;
		width: 100%;
		height: 28px;
		padding: 0 0 0 4px;
		background: transparent;
		border: 2px solid;
		border-color: #c3f5f2 #4d8484 #4d8484 #c3f5f2;
		outline: 0;
	}

	.option i {
		position: absolute;
		right: 7px;
		top: 11px;
		width: 12px;
		height: 7px;
		border: 2px solid;
		border-color: #c3f5f2 #4d8484 #4d8484 #c3f5f2;
		pointer-events: none;
	}

	.first {
		height: 33px;
		padding-right: 70px;
	}

	.layer {
		display: flex;
		align-items: center;
		justify-content: space-between;
		width: 167px;
		padding: 0 16px 0 6px;
	}

	.first .pad {
		width: 110px;
		padding: 0 2px;
	}

	.cell .field {
		flex: 1;
	}

	.slots {
		width: 187px;
		gap: 6px;
		padding: 0 2px 0 9px;
	}

	.slots .option,
	.merging .option {
		flex: 1;
	}

	.second {
		height: 29px;
		padding-right: 70px;
	}

	.thick {
		width: 308px;
		padding: 0 13px 0 2px;
	}

	.thick .field {
		flex: none;
		width: 104px;
		margin: 0 3px 0 13px;
	}

	.second .field input {
		height: 24px;
		padding-bottom: 3px;
	}

	.params {
		width: 176px;
		text-align: left;
		padding-left: 5px;
	}

	.user {
		flex: 1;
		margin-left: 3px;
		padding: 0 2px;
	}

	/* tool table with its scroll bars */
	.scroller {
		display: grid;
		grid-template-columns: 1fr 15px;
		gap: 4px;
		padding: 2px 3px 5px 2px;
	}

	.viewport {
		height: 380px;
		overflow: hidden;
		border: 2px solid;
		border-color: var(--dark) var(--light) var(--light) var(--dark);
	}

	.tools {
		width: 714px;
		margin-top: -1px;
		table-layout: fixed;
		border-collapse: separate;
		border-spacing: 0;
		border-left: 2px solid #000;
	}

	.tools .w0 { width: 26px; }
	.tools .w1 { width: 68px; }
	.tools .w2 { width: 60px; }
	.tools .w3 { width: 69px; }
	.tools .w4 { width: 115px; }
	.tools .w5 { width: 83px; }
	.tools .w6 { width: 74px; }
	.tools .w7 { width: 60px; }

	.tools td {
		height: 33px;
		padding: 0;
		border-right: 2px solid #000;
		border-bottom: 2px solid #000;
	}

	.tools .fig svg {
		display: block;
		margin: 0 auto;
	}

	.fig text {
		font-size: 8px;
	}

	.name button {
		display: block;
		width: 63px;
		height: 27px;
		margin: 0 auto;
		padding-left: 2px;
		border: 2px solid;
		border-color: var(--light) var(--dark) var(--dark) var(--light);
		background: var(--teal);
		text-align: left;
	}

	.name button.on {
		background: var(--amber);
	}

	.tools .num {
		text-align: right;
		padding-right: 2px;
	}

	.tools .slot {
		padding-left: 2px;
	}

	.tools .edit {
		padding: 0 2px;
		background: var(--cream);
	}

	.tools .type {
		padding-left: 6px;
	}

	.edit .field input {
		height: 27px;
		padding-bottom: 6px;
		border-color: #a3a380 #d4d4a8 #d4d4a8 #a3a380;
	}

	.edit .option select {
		height: 27px;
		border-color: #dcdcb0 #a3a380 #a3a380 #dcdcb0;
	}

	.edit .option i {
		border-color: #dcdcb0 #a3a380 #a3a380 #dcdcb0;
	}

	.tools .white {
		background: #fff;
	}

	.white .field input {
		border-color: #999 #ccc #ccc #999;
	}

	.tools .focus {
		box-shadow: inset 0 0 0 2px #000;
	}

	.focus .field input {
		border-color: #fff;
	}

	.bar {
		display: flex;
		align-items: center;
		background: #46ae96;
		border: 2px solid;
		border-color: var(--dark) var(--light) var(--light) var(--dark);
	}

	.bar .thumb {
		background: var(--teal);
		border: 2px solid;
		border-color: var(--light) var(--dark) var(--dark) var(--light);
	}

	.vertical {
		flex-direction: column;
	}

	.vertical .thumb {
		width: 11px;
		height: 182px;
		margin: auto 0 7px;
	}

	.horizontal {
		height: 15px;
	}

	.horizontal .thumb {
		width: 78%;
		height: 11px;
	}

	.nav {
		height: 34px;
		border-top: 1px solid #000;
		border-bottom: 1px solid #000;
	}

	.badge {
		width: 42px;
		padding-left: 4px;
		margin-right: 3px;
		border: 1px solid #000;
		background: var(--amber);
		font-size: 12px;
		line-height: 31px;
	}

	.nav .wide { width: 58px; }
	.nav .step {
		width: 35px;
		font-weight: normal;
	}
	.nav .last { width: 50px; }
	.nav .sq {
		display: grid;
		place-items: center;
		width: 30px;
	}

	.index {
		display: flex;
		align-items: center;
		gap: 4px;
		padding: 0 3px 0 2px;
	}

	.index .field {
		width: 60px;
	}

	.index .field input {
		border-color: var(--dark) var(--light) var(--light) var(--dark);
	}

	.unit,
	.mode {
		width: 88px;
		padding: 0 2px 0 6px;
	}

	.mode {
		width: 116px;
	}

	.unit .option,
	.mode .option {
		flex: 1;
	}

	.merge {
		height: 35px;
		margin-top: 4px;
		border: 1px solid #000;
		border-width: 1px 1px 0;
	}

	.combine {
		width: 131px;
	}

	.merging {
		width: 362px;
		gap: 17px;
		padding: 0 2px 0 11px;
	}

	.do-merge {
		width: 57px;
	}

	.actions .btn {
		flex: 1;
		height: 29px;
	}

	/* popview */
	.pop-body {
		display: flex;
		margin-top: 1px;
		background: var(--teal);
	}

	.pop-canvas {
		flex: none;
		box-sizing: content-box;
		border: 3px solid;
		border-color: var(--dark) var(--light) var(--light) var(--dark);
		background: #000;
	}

	.pop-canvas text {
		font: 15px 'Liberation Sans', sans-serif;
		fill: #2a5cf8;
	}

	.pop-tools {
		flex: 1;
		border-left: 1px solid #000;
	}

	.pop-tools .btn {
		display: grid;
		place-items: center;
		width: 100%;
		height: 35px;
	}

	.pop-close {
		display: block;
		width: 100%;
		height: 29px;
	}
</style>
